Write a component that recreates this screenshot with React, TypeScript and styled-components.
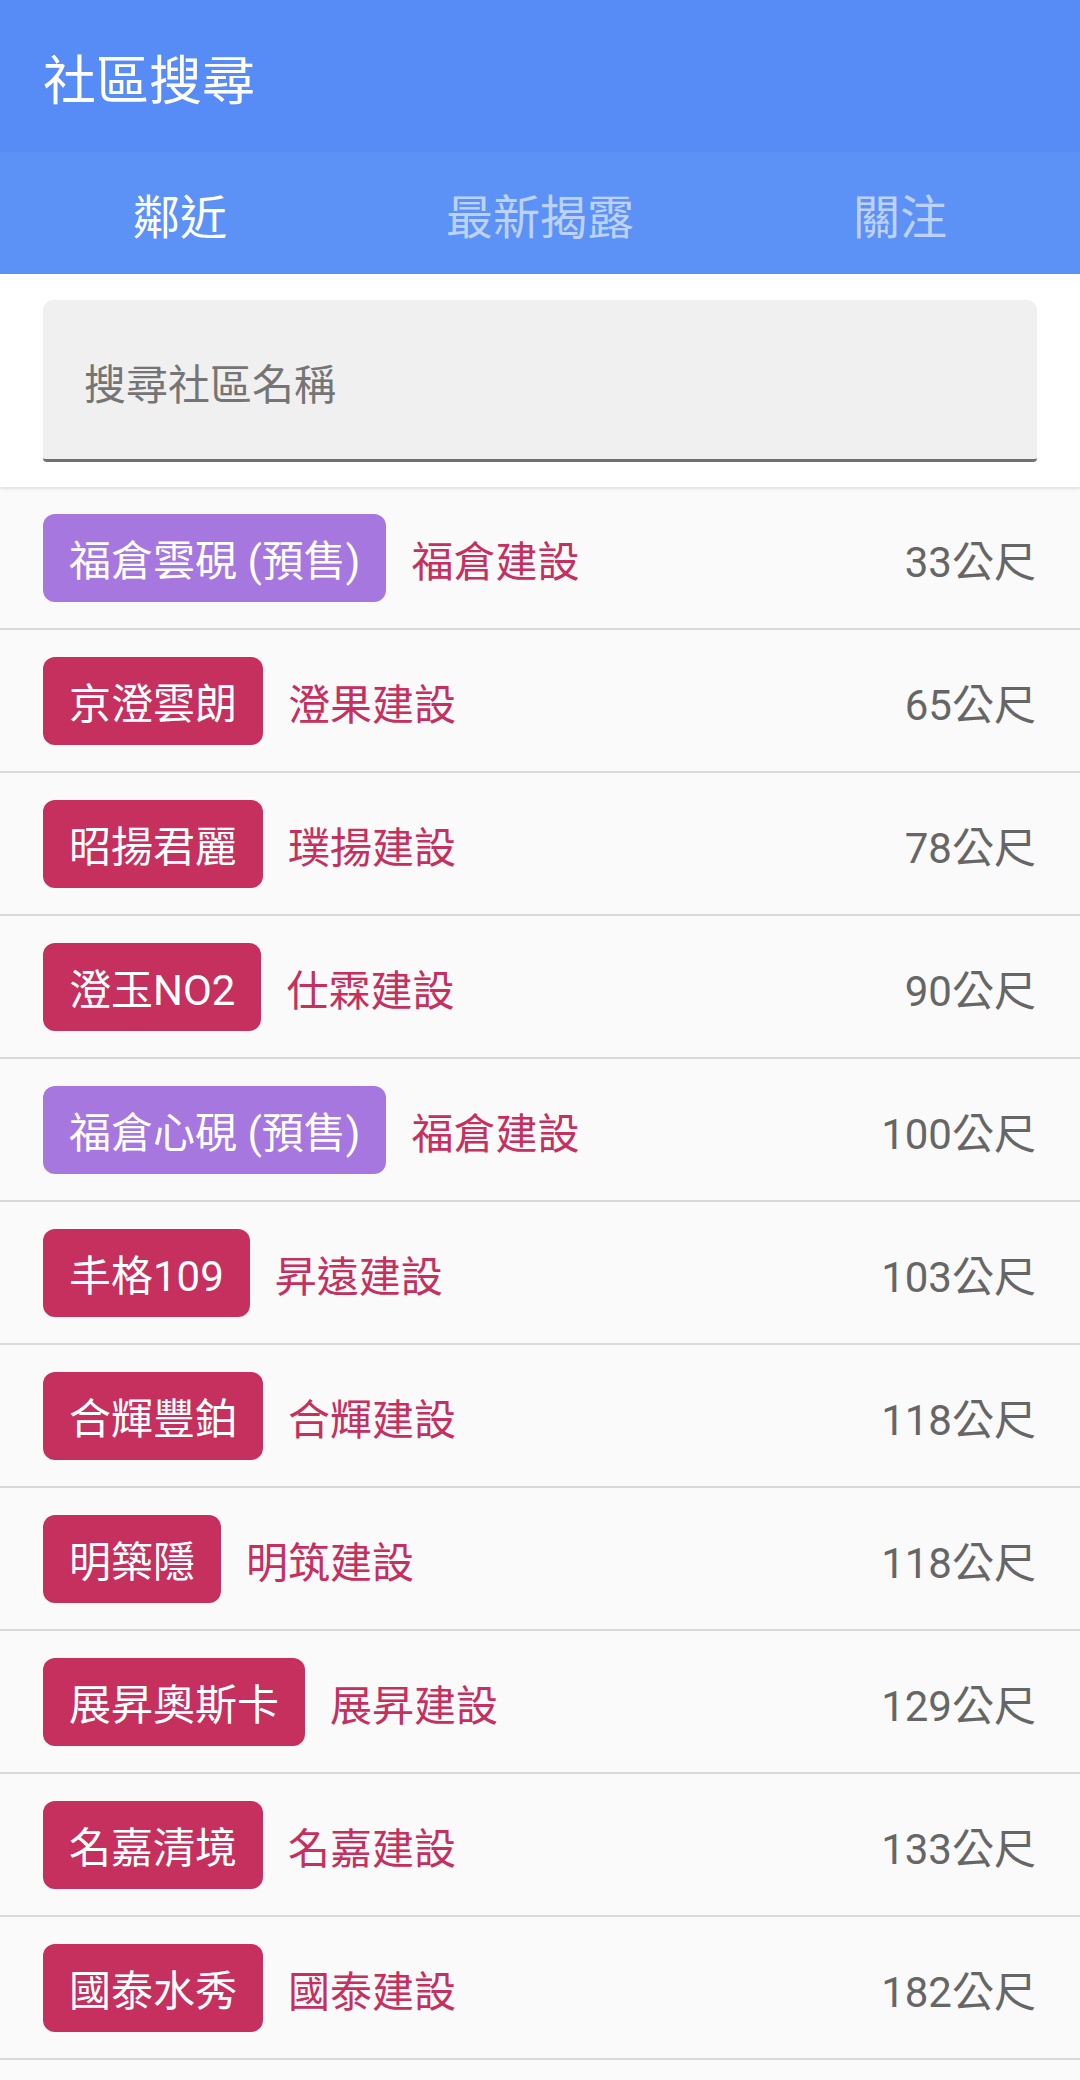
import styled, { createGlobalStyle } from "styled-components";

const GlobalStyle = createGlobalStyle`
  body {
    margin: 0;
    background: #fafafa;
    font-family: Roboto, "Noto Sans CJK TC", sans-serif;
  }
`;

const Page = styled.div`
  display: flex;
  flex-direction: column;
  min-height: 100vh;
  background: #fafafa;
`;

const AppBar = styled.header`
  height: 152px;
  display: flex;
  align-items: center;
  padding: 12px 43px 0;
  box-sizing: border-box;
  background: #578bf5;
`;

const Title = styled.h1`
  margin: 0;
  font-size: 53px;
  font-weight: 400;
  line-height: 1;
  color: #ffffff;
`;

const Tabs = styled.nav`
  height: 122px;
  display: grid;
  grid-template-columns: repeat(3, 1fr);
  background: #5c91f6;
`;

const Tab = styled.button<{ $active?: boolean }>`
  border: none;
  background: transparent;
  padding: 8px 0 0;
  font-family: inherit;
  font-size: 47px;
  line-height: 1;
  color: ${(p) => (p.$active ? "#ffffff" : "rgba(255, 255, 255, 0.6)")};
  cursor: pointer;
`;

const SearchArea = styled.div`
  position: relative;
  z-index: 1;
  padding: 26px 43px 25px;
  background: #ffffff;
  box-shadow: 0 2px 3px rgba(0, 0, 0, 0.1);
`;

const SearchBox = styled.label`
  height: 162px;
  display: flex;
  align-items: center;
  box-sizing: border-box;
  padding: 12px 39px 0;
  background: #f0f0f0;
  border-radius: 10px 10px 4px 4px;
  border-bottom: 3px solid #707070;
`;

const SearchInput = styled.input`
  width: 100%;
  border: none;
  outline: none;
  background: transparent;
  font-family: inherit;
  font-size: 42px;
  color: #212121;

  &::placeholder {
    color: #757575;
  }
`;

const List = styled.ul`
  margin: 0;
  padding: 0;
  list-style: none;
`;

const Row = styled.li`
  height: 141px;
  display: flex;
  align-items: center;
  padding: 0 44px 0 43px;
  background: #fafafa;
  border-bottom: 2px solid #d9d9d9;
`;

const Badge = styled.span<{ $presale?: boolean }>`
  height: 88px;
  display: inline-flex;
  align-items: center;
  box-sizing: border-box;
  padding: 8px 26px 0;
  border-radius: 12px;
  font-size: 42px;
  line-height: 1;
  color: #ffffff;
  white-space: nowrap;
  background: ${(p) => (p.$presale ? "#a777e0" : "#c5305f")};
`;

const Builder = styled.span`
  margin-left: 25px;
  padding-top: 10px;
  font-size: 42px;
  line-height: 1;
  color: #c5305f;
`;

const Distance = styled.span`
  margin-left: auto;
  padding-top: 10px;
  font-size: 42px;
  line-height: 1;
  color: #666666;
`;

type Community = {
  name: string;
  builder: string;
  distance: number;
  presale?: boolean;
};

const communities: Community[] = [
  { name: "福倉雲硯 (預售)", builder: "福倉建設", distance: 33, presale: true },
  { name: "京澄雲朗", builder: "澄果建設", distance: 65 },
  { name: "昭揚君麗", builder: "璞揚建設", distance: 78 },
  { name: "澄玉NO2", builder: "仕霖建設", distance: 90 },
  { name: "福倉心硯 (預售)", builder: "福倉建設", distance: 100, presale: true },
  { name: "丰格109", builder: "昇遠建設", distance: 103 },
  { name: "合輝豐鉑", builder: "合輝建設", distance: 118 },
  { name: "明築隱", builder: "明筑建設", distance: 118 },
  { name: "展昇奧斯卡", builder: "展昇建設", distance: 129 },
  { name: "名嘉清境", builder: "名嘉建設", distance: 133 },
  { name: "國泰水秀", builder: "國泰建設", distance: 182 },
];

const App = () => {
  return (
    <Page>
      <GlobalStyle />
      <AppBar>
        <Title>社區搜尋</Title>
      </AppBar>

      <Tabs>
        <Tab $active>鄰近</Tab>
        <Tab>最新揭露</Tab>
        <Tab>關注</Tab>
      </Tabs>

      <SearchArea>
        <SearchBox>
          <SearchInput placeholder="搜尋社區名稱" />
        </SearchBox>
      </SearchArea>

      <List>
        {communities.map((c) => (
          <Row key={c.name}>
            <Badge $presale={c.presale}>{c.name}</Badge>
            <Builder>{c.builder}</Builder>
            <Distance>{c.distance}公尺</Distance>
          </Row>
        ))}
      </List>
    </Page>
  );
};

export default App;
